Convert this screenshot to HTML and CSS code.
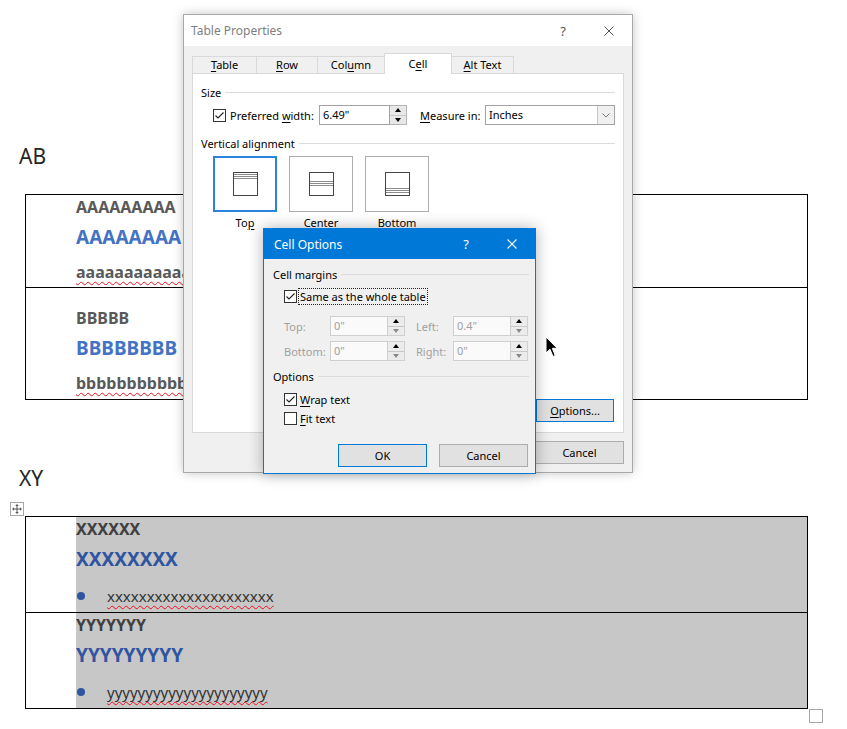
FILE: index.html
```html
<!DOCTYPE html>
<html>
<head>
<meta charset="utf-8">
<link rel="stylesheet" href="styles.css">
</head>
<body>
<!-- document behind the dialogs -->
<div class="page">
    <div class="heading">AB</div>
    <div class="doc-table t-ab">
        <div class="row row-a">
            <div class="gutter"></div>
            <div class="cell">
                <div class="l1">AAAAAAAAA</div>
                <div class="l2">AAAAAAAA</div>
                <div class="l3"><span class="spell">aaaaaaaaaaaa</span></div>
            </div>
        </div>
        <div class="row row-b">
            <div class="gutter"></div>
            <div class="cell">
                <div class="l1">BBBBB</div>
                <div class="l2">BBBBBBBB</div>
                <div class="l3"><span class="spell">bbbbbbbbbbb</span></div>
            </div>
        </div>
    </div>

    <div class="heading heading-xy">XY</div>
    <div class="move-handle">
        <svg width="14" height="14" viewBox="0 0 14 14">
            <rect x="0.5" y="0.5" width="13" height="13" fill="#fff" stroke="#a6a6a6"/>
            <path d="M7 3.5V10.5M3.5 7H10.5" stroke="#555"/>
            <path d="M7 2L5.2 4H8.8Z M7 12L5.2 10H8.8Z M2 7L4 5.2V8.8Z M12 7L10 5.2V8.8Z" fill="#555"/>
        </svg>
    </div>
    <div class="doc-table t-xy">
        <div class="row row-x">
            <div class="gutter"></div>
            <div class="cell">
                <div class="l1">XXXXXX</div>
                <div class="l2">XXXXXXXX</div>
                <div class="l3 bullet"><span class="dot"></span><span class="spell">xxxxxxxxxxxxxxxxxxxxx</span></div>
            </div>
        </div>
        <div class="row row-y">
            <div class="gutter"></div>
            <div class="cell">
                <div class="l1">YYYYYYY</div>
                <div class="l2">YYYYYYYYY</div>
                <div class="l3 bullet"><span class="dot"></span><span class="spell">yyyyyyyyyyyyyyyyyyyyy</span></div>
            </div>
        </div>
    </div>
    <div class="resize-handle"></div>
</div>

<!-- Table Properties window -->
<div class="dialog props">
    <div class="titlebar">
        <span class="title">Table Properties</span>
        <span class="tb-btn">?</span>
        <span class="tb-btn">
            <svg width="10" height="10" viewBox="0 0 10 10"><path d="M0.5 0.5L9.5 9.5M9.5 0.5L0.5 9.5" stroke="#555"/></svg>
        </span>
    </div>
    <div class="props-body">
        <div class="tabs">
            <span class="tab tab-table"><u>T</u>able</span>
            <span class="tab tab-row"><u>R</u>ow</span>
            <span class="tab tab-col">Col<u>u</u>mn</span>
            <span class="tab tab-cell active">C<u>e</u>ll</span>
            <span class="tab tab-alt"><u>A</u>lt Text</span>
        </div>
        <div class="panel">
            <div class="group group-size">Size</div>
            <div class="width-row">
                <span class="check on">
                    <svg width="11" height="11" viewBox="0 0 11 11"><path d="M1.5 5.5L4 8L9.5 2.5" fill="none" stroke="#222" stroke-width="1.1"/></svg>
                </span>
                <span class="lbl lbl-pw">Preferred <u>w</u>idth:</span>
                <span class="field field-pw">6.49"</span>
                <span class="spin"><span class="half"><i class="up"></i></span><span class="half"><i class="down"></i></span></span>
                <span class="lbl lbl-mi"><u>M</u>easure in:</span>
                <span class="select">
                    <span class="select-text">Inches</span>
                    <span class="select-arrow">
                        <svg width="8" height="5" viewBox="0 0 8 5"><path d="M0.5 0.5L4 4L7.5 0.5" fill="none" stroke="#777"/></svg>
                    </span>
                </span>
            </div>
            <div class="group group-va">Vertical alignment</div>
            <div class="valign-row">
                <div class="valign-item">
                    <div class="valign-box selected">
                        <svg width="25" height="24" viewBox="0 0 25 24">
                            <rect x="0.5" y="0.5" width="24" height="23" fill="#fff" stroke="#444"/>
                            <path d="M1 2.5H24M1 4.5H24M1 6.5H24" stroke="#8c8c8c"/>
                        </svg>
                    </div>
                    <span class="valign-label">To<u>p</u></span>
                </div>
                <div class="valign-item">
                    <div class="valign-box">
                        <svg width="25" height="24" viewBox="0 0 25 24">
                            <rect x="0.5" y="0.5" width="24" height="23" fill="#fff" stroke="#444"/>
                            <path d="M1 9.5H24M1 11.5H24M1 13.5H24" stroke="#8c8c8c"/>
                        </svg>
                    </div>
                    <span class="valign-label"><u>C</u>enter</span>
                </div>
                <div class="valign-item">
                    <div class="valign-box">
                        <svg width="25" height="24" viewBox="0 0 25 24">
                            <rect x="0.5" y="0.5" width="24" height="23" fill="#fff" stroke="#444"/>
                            <path d="M1 16.5H24M1 18.5H24M1 20.5H24" stroke="#8c8c8c"/>
                        </svg>
                    </div>
                    <span class="valign-label"><u>B</u>ottom</span>
                </div>
            </div>
            <div class="panel-foot">
                <span class="btn btn-default btn-options"><u>O</u>ptions...</span>
            </div>
        </div>
        <div class="props-foot">
            <span class="btn">Cancel</span>
        </div>
    </div>
</div>

<!-- Cell Options window -->
<div class="dialog cellopts">
    <div class="titlebar">
        <span class="title">Cell Options</span>
        <span class="tb-btn">?</span>
        <span class="tb-btn">
            <svg width="10" height="10" viewBox="0 0 10 10"><path d="M0.5 0.5L9.5 9.5M9.5 0.5L0.5 9.5" stroke="#fff" stroke-width="1.1"/></svg>
        </span>
    </div>
    <div class="cellopts-body">
        <div class="group group-cm">Cell margins</div>
        <div class="opt-row same-row">
            <span class="check on">
                <svg width="11" height="11" viewBox="0 0 11 11"><path d="M1.5 5.5L4 8L9.5 2.5" fill="none" stroke="#222" stroke-width="1.1"/></svg>
            </span>
            <span class="focus-lbl">Same as the whole table</span>
        </div>
        <div class="margin-row first">
            <span class="dis-lbl lbl-top">Top:</span>
            <span class="field dis">0"</span>
            <span class="spin dis"><span class="half"><i class="up"></i></span><span class="half"><i class="down"></i></span></span>
            <span class="dis-lbl lbl-left">Left:</span>
            <span class="field dis">0.4"</span>
            <span class="spin dis"><span class="half"><i class="up"></i></span><span class="half"><i class="down"></i></span></span>
        </div>
        <div class="margin-row">
            <span class="dis-lbl lbl-top">Bottom:</span>
            <span class="field dis">0"</span>
            <span class="spin dis"><span class="half"><i class="up"></i></span><span class="half"><i class="down"></i></span></span>
            <span class="dis-lbl lbl-left">Right:</span>
            <span class="field dis">0"</span>
            <span class="spin dis"><span class="half"><i class="up"></i></span><span class="half"><i class="down"></i></span></span>
        </div>
        <div class="group group-opt">Options</div>
        <div class="opt-row wrap-row">
            <span class="check on">
                <svg width="11" height="11" viewBox="0 0 11 11"><path d="M1.5 5.5L4 8L9.5 2.5" fill="none" stroke="#222" stroke-width="1.1"/></svg>
            </span>
            <span class="opt-lbl"><u>W</u>rap text</span>
        </div>
        <div class="opt-row fit-row">
            <span class="check"></span>
            <span class="opt-lbl"><u>F</u>it text</span>
        </div>
        <div class="cellopts-foot">
            <span class="btn btn-default">OK</span>
            <span class="btn">Cancel</span>
        </div>
    </div>
</div>

<svg class="cursor" width="13" height="22" viewBox="0 0 13 22">
    <path d="M1 1V17L5 13.2L8 20.5L10.3 19.5L7.3 12.3H12.2Z" fill="#000" stroke="#fff" stroke-width="1"/>
</svg>
</body>
</html>
```

FILE: styles.css
```css
* {
    margin: 0;
    padding: 0;
    box-sizing: border-box;
}

body {
    width: 847px;
    height: 729px;
    overflow: hidden;
    position: relative;
    background: #fff;
    font-family: "Noto Sans", "Open Sans", sans-serif;
}

/* Document */
.page {
    padding-top: 142px;
}

.heading {
    height: 28px;
    line-height: 28px;
    padding-left: 19px;
    font-size: 21px;
    color: #262626;
}

.heading-xy {
    margin-top: 64px;
}

.doc-table {
    margin-left: 25px;
    width: 783px;
    border: 1px solid #000;
}

.t-ab {
    margin-top: 24px;
}

.row {
    display: flex;
}

.row + .row {
    border-top: 1px solid #000;
}

.row-a { height: 92px; }
.row-b { height: 112px; padding-top: 20px; }
.row-x { height: 95px; }
.row-y { height: 96px; }

.gutter {
    width: 50px;
    flex: none;
}

.cell {
    flex: 1;
    padding-top: 2px;
    white-space: nowrap;
}

.row-b .cell {
    padding-top: 0;
}

.row-b .gutter {
    margin-top: -20px;
}

.t-xy .cell {
    background: #c7c7c7;
}

.l1 {
    height: 20px;
    line-height: 20px;
    font-size: 16px;
    font-weight: bold;
    color: #595959;
}

.l2 {
    height: 26px;
    line-height: 26px;
    margin-top: 7px;
    font-size: 19px;
    font-weight: bold;
    color: #4472c4;
}

.l3 {
    height: 20px;
    line-height: 20px;
    margin-top: 12px;
    font-size: 16px;
    font-weight: bold;
    color: #595959;
}

.t-xy .l1 { color: #404040; }
.t-xy .l2 { color: #2f55a0; }

.l3.bullet {
    display: flex;
    align-items: center;
    margin-top: 14px;
    font-size: 15px;
    font-weight: normal;
    color: #333;
}

.dot {
    width: 8px;
    height: 8px;
    margin: 0 22px 0 1px;
    border-radius: 50%;
    background: #2f55a0;
}

.spell {
    text-decoration: underline wavy #e81123;
    text-decoration-thickness: 1px;
    text-underline-offset: 3px;
    text-decoration-skip-ink: none;
}

.move-handle {
    margin: 10px 0 0 10px;
    width: 14px;
    height: 14px;
}

.move-handle svg {
    display: block;
}

.resize-handle {
    margin-left: 809px;
    width: 14px;
    height: 14px;
    border: 1px solid #a6a6a6;
}

/* Dialogs */
.dialog {
    position: absolute;
    display: flex;
    flex-direction: column;
    background: #f0f0f0;
    font-size: 11px;
    color: #000;
}

.dialog u {
    text-decoration-thickness: 1px;
    text-underline-offset: 2px;
}

.props {
    left: 183px;
    top: 14px;
    width: 450px;
    height: 459px;
    border: 1px solid #a8a8a8;
    box-shadow: 0 0 10px rgba(0, 0, 0, 0.22);
}

.titlebar {
    display: flex;
    align-items: center;
    flex: none;
    height: 31px;
    padding-left: 7px;
    background: #fff;
    font-size: 12px;
    color: #808080;
}

.titlebar .title {
    flex: 1;
}

.tb-btn {
    width: 46px;
    height: 100%;
    display: flex;
    align-items: center;
    justify-content: center;
    font-size: 13px;
    color: #555;
}

.props-body {
    flex: 1;
    display: flex;
    flex-direction: column;
    padding: 7px 8px 0 8px;
}

.tabs {
    display: flex;
    align-items: flex-end;
    height: 21px;
    margin-bottom: -1px;
    position: relative;
    z-index: 1;
}

.tab {
    height: 18px;
    line-height: 16px;
    text-align: center;
    border: 1px solid #d9d9d9;
    background: #f0f0f0;
    color: #000;
}

.tab + .tab {
    margin-left: -1px;
}

.tab.active {
    height: 21px;
    line-height: 20px;
    border-bottom: none;
    background: #fff;
}

.tab-table { width: 65px; }
.tab-row { width: 62px; }
.tab-col { width: 68px; }
.tab-cell { width: 68px; }
.tab-alt { width: 63px; }

.panel {
    height: 360px;
    display: flex;
    flex-direction: column;
    padding: 0 8px 10px 8px;
    background: #fff;
    border: 1px solid #d9d9d9;
}

.group {
    display: flex;
    align-items: center;
    height: 16px;
    gap: 4px;
    white-space: nowrap;
}

.group::after {
    content: "";
    flex: 1;
    height: 1px;
    background: #dcdcdc;
}

.group-size { margin-top: 10px; }
.group-va { margin-top: 10px; }

.width-row {
    display: flex;
    align-items: center;
    height: 20px;
    margin-top: 5px;
    padding-left: 12px;
}

.check {
    width: 13px;
    height: 13px;
    flex: none;
    display: flex;
    align-items: center;
    justify-content: center;
    background: #fff;
    border: 1px solid #333;
}

.lbl {
    white-space: nowrap;
}

.lbl-pw {
    width: 93px;
    padding-left: 4px;
}

.lbl-mi {
    width: 78px;
    padding-left: 13px;
}

.field {
    height: 20px;
    line-height: 18px;
    padding-left: 3px;
    background: #fff;
    border: 1px solid #a3a3a3;
    white-space: nowrap;
}

.field-pw {
    width: 71px;
}

.spin {
    width: 17px;
    height: 20px;
    display: flex;
    flex-direction: column;
    border: 1px solid #b5b5b5;
    border-left: none;
    background: #e8e8e8;
}

.half {
    flex: 1;
    display: flex;
    align-items: center;
    justify-content: center;
}

.half + .half {
    border-top: 1px solid #c8c8c8;
}

.up {
    border-left: 3px solid transparent;
    border-right: 3px solid transparent;
    border-bottom: 4px solid #000;
}

.down {
    border-left: 3px solid transparent;
    border-right: 3px solid transparent;
    border-top: 4px solid #000;
}

.select {
    width: 130px;
    height: 20px;
    display: flex;
    border: 1px solid #a3a3a3;
    background: #fff;
}

.select-text {
    flex: 1;
    line-height: 18px;
    padding-left: 3px;
}

.select-arrow {
    width: 17px;
    display: flex;
    align-items: center;
    justify-content: center;
    border-left: 1px solid #c8c8c8;
    background: #f0f0f0;
}

.valign-row {
    display: flex;
    gap: 12px;
    margin-top: 5px;
    padding-left: 12px;
}

.valign-item {
    width: 64px;
    display: flex;
    flex-direction: column;
    align-items: center;
}

.valign-box {
    width: 64px;
    height: 56px;
    display: flex;
    align-items: center;
    justify-content: center;
    background: #fff;
    border: 1px solid #adadad;
}

.valign-box.selected {
    border: 2px solid #2a84dc;
}

.valign-box svg {
    display: block;
}

.valign-label {
    margin-top: 3px;
    height: 16px;
    line-height: 16px;
    white-space: nowrap;
}

.panel-foot {
    margin-top: auto;
    display: flex;
    justify-content: flex-end;
    padding-right: 1px;
}

.btn {
    width: 89px;
    height: 23px;
    line-height: 21px;
    text-align: center;
    background: #e1e1e1;
    border: 1px solid #adadad;
    white-space: nowrap;
}

.btn-default {
    border-color: #0078d7;
}

.btn-options {
    width: 78px;
}

.props-foot {
    display: flex;
    justify-content: flex-end;
    padding: 8px 0 0 0;
}

.cellopts {
    left: 263px;
    top: 228px;
    width: 273px;
    height: 246px;
    border: 1px solid #0078d7;
    box-shadow: 0 0 14px rgba(0, 0, 0, 0.3);
}

.cellopts .titlebar {
    height: 30px;
    padding-left: 10px;
    background: #0078d7;
    color: #fff;
}

.cellopts .tb-btn {
    color: #fff;
}

.cellopts-body {
    flex: 1;
    display: flex;
    flex-direction: column;
    padding: 0 6px 6px 9px;
}

.group-cm { margin-top: 7px; }
.group-opt { margin-top: 7px; }

.opt-row {
    display: flex;
    align-items: center;
    height: 18px;
    padding-left: 11px;
}

.same-row { margin-top: 5px; }
.wrap-row { margin-top: 6px; }
.fit-row { margin-top: 1px; }

.focus-lbl {
    margin-left: 1px;
    height: 17px;
    line-height: 15px;
    padding: 0 1px;
    border: 1px dotted #222;
    white-space: nowrap;
}

.opt-lbl {
    margin-left: 3px;
    white-space: nowrap;
}

.margin-row {
    display: flex;
    align-items: center;
    height: 20px;
    margin-top: 5px;
    padding-left: 11px;
}

.margin-row.first {
    margin-top: 11px;
}

.dis-lbl {
    color: #a0a0a0;
    white-space: nowrap;
}

.lbl-top { width: 46px; }
.lbl-left { width: 37px; margin-left: 11px; }

.field.dis {
    width: 58px;
    color: #a0a0a0;
    background: #fafafa;
    border-color: #cfcfcf;
}

.spin.dis {
    border-color: #d0d0d0;
    background: #ececec;
}

.spin.dis .down {
    border-top-color: #8a8a8a;
}

.cellopts-foot {
    margin-top: auto;
    display: flex;
    justify-content: flex-end;
    gap: 12px;
    padding-right: 1px;
}

.cursor {
    position: absolute;
    left: 545px;
    top: 336px;
}
```
